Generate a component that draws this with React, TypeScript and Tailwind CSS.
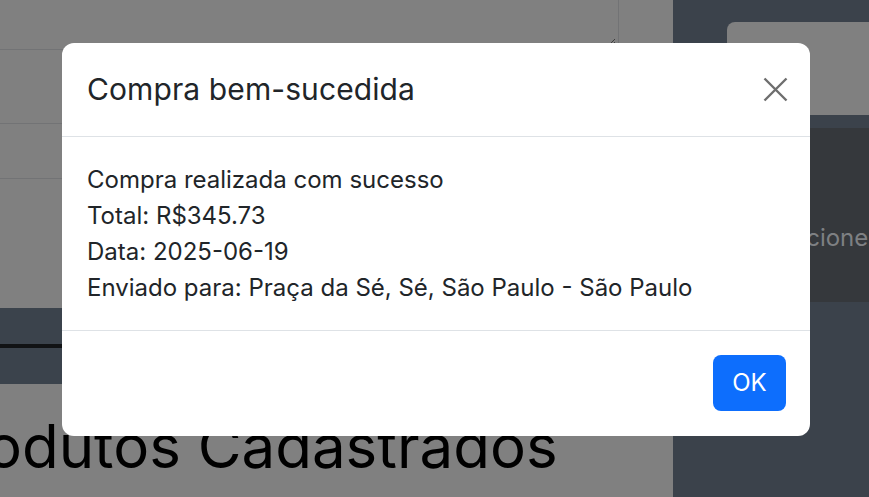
import React from "react";

export default function App() {
  return (
    <div className="relative w-[869px] h-[497px] overflow-hidden bg-[#808080] font-['Inter',sans-serif]">
      {/* background page (already dimmed by the backdrop) */}
      <div className="flex h-full">
        <div className="relative w-[673px] h-full flex flex-col">
          <div className="h-[43px] flex">
            <div className="w-[619px] border-r border-[#727375] relative">
              <svg className="absolute right-[2px] bottom-[-3px]" width="9" height="9" viewBox="0 0 9 9">
                <path d="M8 2 L2 8 M8 5 L5 8" stroke="#3d3d3d" strokeWidth="1" />
              </svg>
            </div>
          </div>
          <div className="h-[6px]" />
          <div className="h-[74px] border-t border-[#727375]" />
          <div className="h-[55px] border-t border-[#727375]" />
          <div className="h-[130px] border-t border-[#727375]" />
          <div className="h-[76px] bg-[#3b434c] flex flex-col">
            <div className="h-[36px]" />
            <div className="h-[4px] bg-[#111315]" />
          </div>
          <div className="pt-[26px]">
            <h1 className="text-[60px] leading-[72px] font-normal text-black whitespace-nowrap -ml-[74px]">
              Produtos Cadastrados
            </h1>
          </div>
        </div>
        <div className="flex-1 bg-[#3b424b] flex flex-col">
          <div className="h-[22px]" />
          <div className="ml-[54px] h-[93px] bg-[#808080] rounded-tl-[8px]" />
          <div className="h-[13px]" />
          <div className="h-[174px] bg-[#35383c] pt-[92px]">
            <span className="block ml-[84px] text-[24px] leading-[36px] text-[#7e8083] whitespace-nowrap">Selecione</span>
          </div>
        </div>
      </div>

      {/* modal */}
      <div className="absolute inset-0 pl-[62px] pt-[43px]">
        <div className="w-[748px] bg-white rounded-[12px] flex flex-col text-[#212529]">
          <div className="h-[94px] border-b-[1.5px] border-[#dee2e6] flex items-center justify-between pl-[25px] pr-[22px]">
            <h5 className="text-[30px] leading-[45px] font-normal tracking-[0.1px]">Compra bem-sucedida</h5>
            <svg width="25" height="25" viewBox="0 0 25 25">
              <path d="M1.5 1.5 L23.5 23.5 M23.5 1.5 L1.5 23.5" stroke="#6e6e6e" strokeWidth="2.4" />
            </svg>
          </div>
          <div className="px-[25px] pt-[25px] pb-[24px] text-[24px] leading-[36px]">
            <p>Compra realizada com sucesso</p>
            <p>Total: R$345.73</p>
            <p>Data: 2025-06-19</p>
            <p>Enviado para: Praça da Sé, Sé, São Paulo - São Paulo</p>
          </div>
          <div className="border-t-[1.5px] border-[#dee2e6] flex justify-end pt-[24px] pr-[24px] pb-[25px]">
            <button className="w-[73px] h-[56px] rounded-[8px] bg-[#0d6efd] text-white text-[24px]">OK</button>
          </div>
        </div>
      </div>
    </div>
  );
}
